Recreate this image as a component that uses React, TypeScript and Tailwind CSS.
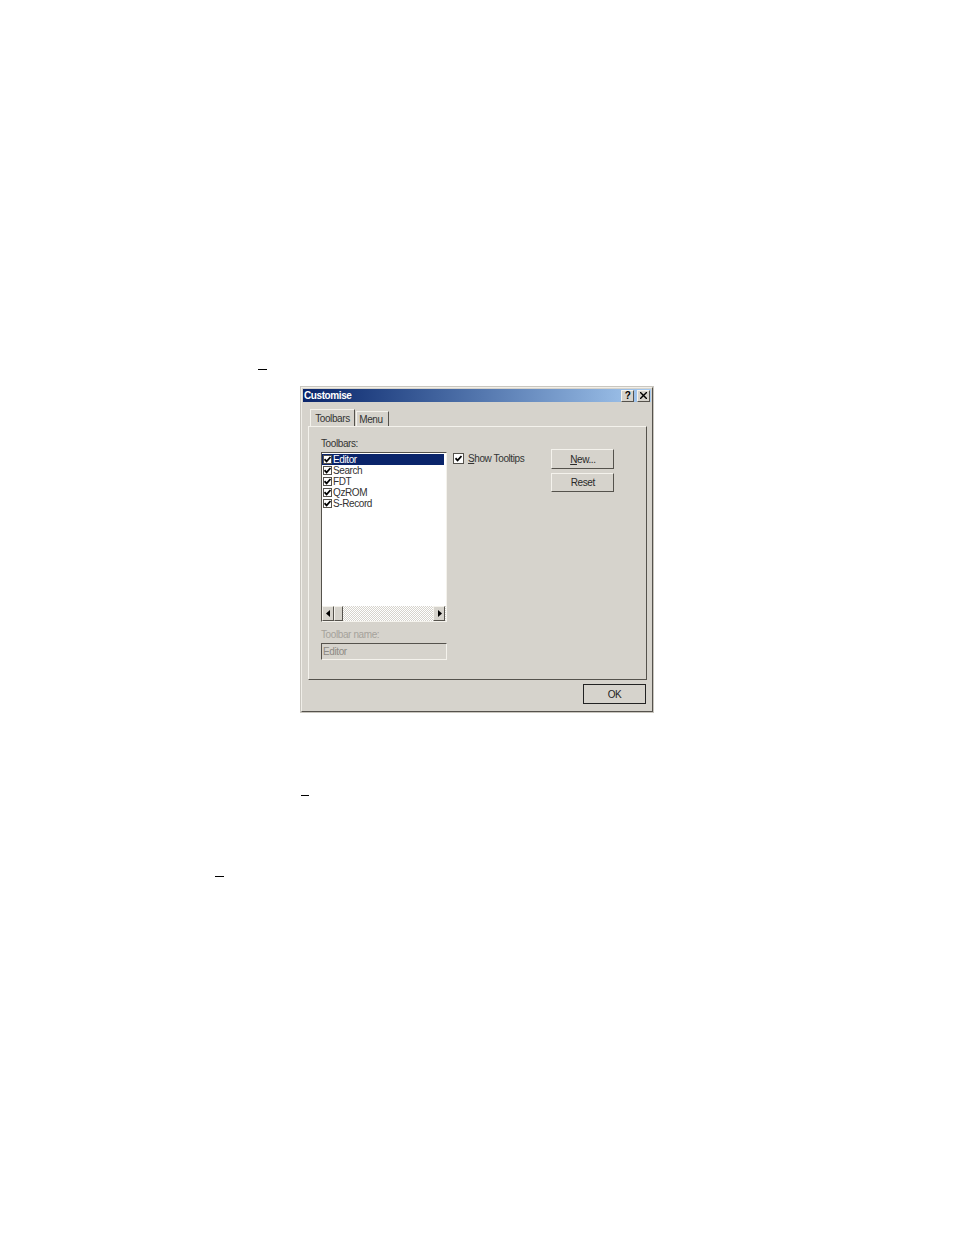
const toolbars = ["Editor", "Search", "FDT", "QzROM", "S-Record"];

const raised =
  "border border-t-[#f4f2ec] border-l-[#f4f2ec] border-r-[#55524c] border-b-[#55524c] bg-[#d6d3cc]";

function Tick({ large }: { large?: boolean }) {
  return (
    <span
      className={`flex shrink-0 items-center justify-center border border-[#55524c] bg-white ${
        large ? "h-[11px] w-[11px]" : "h-[9px] w-[9px]"
      }`}
    >
      <svg width="7" height="7" viewBox="0 0 7 7">
        <path d="M0.5 3.2 L2.6 5.4 L6.5 1" fill="none" stroke="#000" strokeWidth="1.7" />
      </svg>
    </span>
  );
}

function Button({ label, className }: { label: React.ReactNode; className: string }) {
  return (
    <div className={`flex w-[63px] items-center justify-center text-[#2a2a2a] ${raised} ${className}`}>
      {label}
    </div>
  );
}

function Arrow({ left }: { left?: boolean }) {
  return (
    <div className={`flex h-[15px] w-[12px] shrink-0 items-center justify-center ${raised}`}>
      <svg width="5" height="7" viewBox="0 0 5 7">
        <path d={left ? "M4 0 L4 7 L0 3.5 Z" : "M1 0 L1 7 L5 3.5 Z"} fill="#000" />
      </svg>
    </div>
  );
}

function Dash({ className }: { className: string }) {
  return <div className={`h-px bg-black ${className}`} />;
}

export default function App() {
  return (
    <div className="h-[1235px] w-[954px] overflow-hidden bg-white font-['Liberation_Sans',sans-serif] text-[10px] leading-[11px] tracking-[-0.4px]">
      <div className="pt-[369px]">
        <Dash className="ml-[258px] w-[9px]" />
      </div>

      <div className="ml-[301px] mt-[17px] h-[325px] w-[352px] border border-[#f0eee8] border-r-[#55524c] border-b-[#55524c] bg-[#d6d3cc] p-px outline outline-1 outline-[#c9c6bf]">
        <div className="flex h-[13px] items-center justify-between bg-gradient-to-r from-[#0a246a] to-[#a6caf0] px-px">
          <span className="font-bold text-white">Customise</span>
          <div className="flex gap-[3px]">
            <div className={`flex h-[12px] w-[13px] items-center justify-center font-bold text-black ${raised}`}>?</div>
            <div className={`flex h-[12px] w-[13px] items-center justify-center ${raised}`}>
              <svg width="7" height="7" viewBox="0 0 7 7">
                <path d="M0 0 L7 7 M7 0 L0 7" stroke="#000" strokeWidth="1.4" />
              </svg>
            </div>
          </div>
        </div>

        <div className="ml-[5px] mt-[7px] flex h-[17px] items-end pl-[2px]">
          <div className="flex h-[17px] w-[45px] items-center justify-center border-l border-t border-[#f4f2ec] border-r border-r-[#55524c] text-[#333]">
            Toolbars
          </div>
          <div className="ml-px flex h-[15px] w-[33px] items-center justify-center border-l border-t border-[#f4f2ec] border-r border-r-[#55524c] pr-[3px] text-[#333]">
            Menu
          </div>
        </div>

        <div className="ml-[5px] flex h-[254px] w-[339px] border border-[#f4f2ec] border-r-[#55524c] border-b-[#55524c] pl-[12px] pt-[11px]">
          <div className="w-[126px]">
            <div className="h-[14px] text-[#333]">Toolbars:</div>
            <div className="flex h-[170px] flex-col border border-[#55524c] border-r-[#f4f2ec] border-b-[#f4f2ec] bg-white">
              <div className="flex-1 pt-px">
                {toolbars.map((name, i) => (
                  <div
                    key={name}
                    className={`flex h-[11px] items-center gap-px pl-px ${
                      i === 0 ? "mr-[2px] bg-[#0a246a] text-white" : "text-[#333]"
                    }`}
                  >
                    <Tick />
                    {name}
                  </div>
                ))}
              </div>
              <div className="flex h-[15px] items-center bg-[repeating-conic-gradient(#d6d3cc_0%_25%,#ffffff_0%_50%)] bg-[length:2px_2px] pr-px">
                <Arrow left />
                <div className={`h-[15px] w-[9px] ${raised}`} />
                <div className="flex-1" />
                <Arrow />
              </div>
            </div>
            <div className="mt-[7px] h-[14px] text-[#a5a29b]">Toolbar name:</div>
            <div className="flex h-[17px] w-[126px] items-center border border-[#55524c] border-r-[#f4f2ec] border-b-[#f4f2ec] pl-px text-[#8d8a84]">
              Editor
            </div>
          </div>

          <div className="ml-[6px] mt-[14px] flex h-[12px] items-center">
            <Tick large />
            <span className="ml-[4px] text-[#333]">
              <span className="underline">S</span>how Tooltips
            </span>
          </div>

          <div className="ml-[27px] mt-[11px] flex flex-col gap-[4px]">
            <Button
              className="h-[20px]"
              label={
                <>
                  <span className="underline">N</span>ew...
                </>
              }
            />
            <Button className="h-[19px]" label="Reset" />
          </div>
        </div>

        <div className="mt-[4px] flex justify-end pr-[5px]">
          <div className="flex h-[20px] w-[63px] items-center justify-center border border-[#222] bg-[#d6d3cc] text-[#222]">
            OK
          </div>
        </div>
      </div>

      <div className="pt-[83px]">
        <Dash className="ml-[301px] w-[8px]" />
      </div>
      <div className="pt-[80px]">
        <Dash className="ml-[215px] w-[9px]" />
      </div>
    </div>
  );
}
